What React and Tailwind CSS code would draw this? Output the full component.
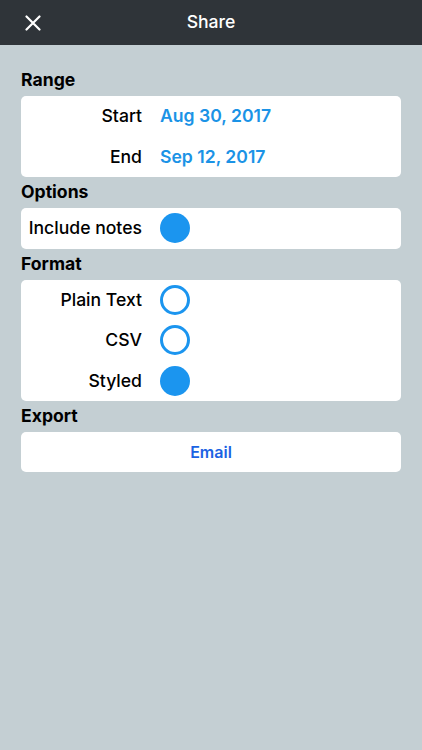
import React from 'react';

const font = { fontFamily: 'Inter, "Noto Sans", sans-serif' };

function Radio({ on }) {
  return on ? (
    <span className="block w-[30px] h-[30px] rounded-full bg-[#1b95ef]" />
  ) : (
    <span className="block w-[30px] h-[30px] rounded-full border-[3px] border-[#1b95ef] bg-white" />
  );
}

function Row({ label, children }) {
  return (
    <div className="flex items-center h-[40.5px]">
      <div className="w-[121px] text-right text-[17.6px] font-medium text-black">{label}</div>
      <div className="ml-[18px] flex items-center">{children}</div>
    </div>
  );
}

function Heading({ children }) {
  return <div className="h-[31px] flex items-center text-[17.6px] font-bold text-black">{children}</div>;
}

export default function App() {
  const formats = [
    { label: 'Plain Text', on: false },
    { label: 'CSV', on: false },
    { label: 'Styled', on: true },
  ];

  return (
    <div style={font} className="w-[422px] h-[750px] bg-[#c4cfd3] flex flex-col">
      {/* nav bar */}
      <div className="relative h-[45px] bg-[#2f3439] flex items-center justify-center">
        <button className="absolute left-[25px] top-[15px] w-[16px] h-[16px]">
          <svg viewBox="0 0 16 16" width="16" height="16">
            <path d="M1.5 1.5 L14.5 14.5 M14.5 1.5 L1.5 14.5" stroke="white" strokeWidth="2.2" strokeLinecap="round" />
          </svg>
        </button>
        <span className="text-white text-[17.6px] font-medium">Share</span>
      </div>

      <div className="px-[21px] pt-[20px]">
        <Heading>Range</Heading>
        <div className="bg-white rounded-[5px]">
          <Row label="Start">
            <span className="text-[17.6px] font-semibold text-[#1b93e6]">Aug 30, 2017</span>
          </Row>
          <Row label="End">
            <span className="text-[17.6px] font-semibold text-[#1b93e6]">Sep 12, 2017</span>
          </Row>
        </div>

        <Heading>Options</Heading>
        <div className="bg-white rounded-[5px]">
          <Row label="Include notes">
            <Radio on />
          </Row>
        </div>

        <Heading>Format</Heading>
        <div className="bg-white rounded-[5px]">
          {formats.map((f) => (
            <Row key={f.label} label={f.label}>
              <Radio on={f.on} />
            </Row>
          ))}
        </div>

        <Heading>Export</Heading>
        <div className="bg-white rounded-[5px] h-[40px] flex items-center justify-center">
          <span className="text-[16px] font-semibold text-[#1b63e3]">Email</span>
        </div>
      </div>
    </div>
  );
}
